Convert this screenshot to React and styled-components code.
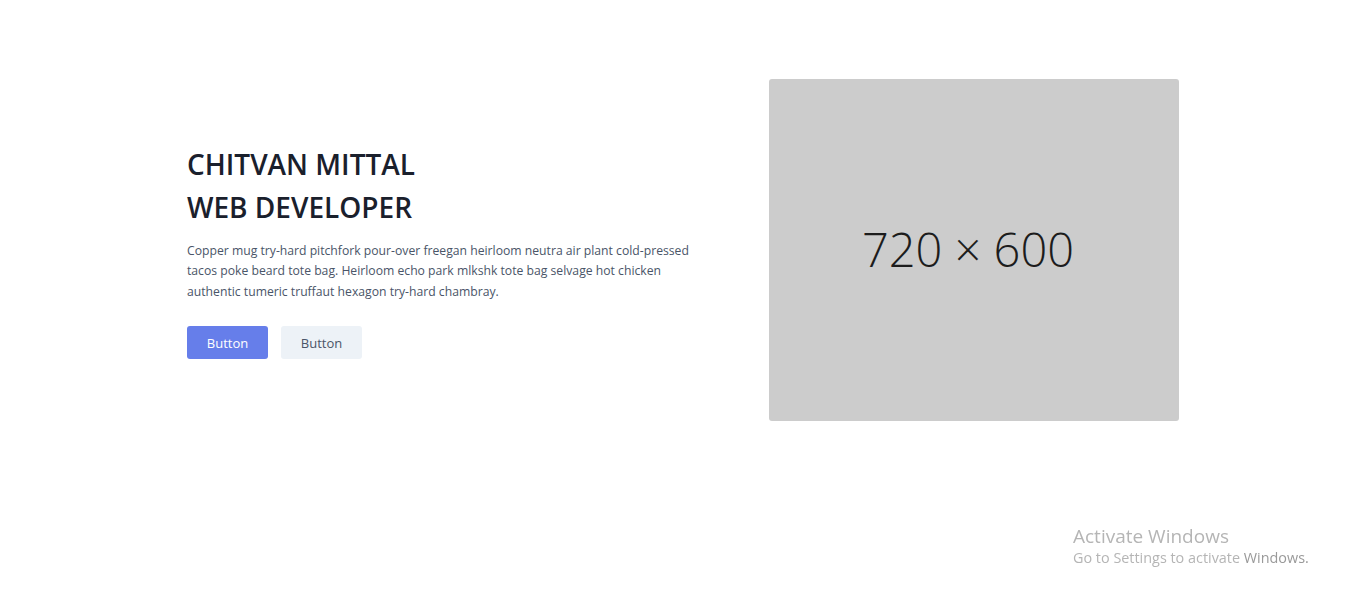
import React from 'react';
import styled, { createGlobalStyle } from 'styled-components';

const GlobalStyle = createGlobalStyle`
  html, body {
    margin: 0;
    padding: 0;
    background: #ffffff;
    font-family: "Open Sans", "Noto Sans", sans-serif;
  }
  * {
    box-sizing: border-box;
  }
`;

const Section = styled.section`
  color: #4a5568;
  padding: 79px 0 100px;
`;

const Container = styled.div`
  width: 992px;
  margin: 0 auto;
  display: flex;
  align-items: center;
  justify-content: space-between;
`;

const TextColumn = styled.div`
  flex: 1;
  padding-right: 64px;
  display: flex;
  flex-direction: column;
  align-items: flex-start;
`;

const Title = styled.h1`
  margin: 2px 0 12px;
  font-size: 28px;
  line-height: 43px;
  font-weight: 600;
  color: #1a202c;
`;

const Lead = styled.p`
  margin: 0 0 24px;
  font-size: 12.2px;
  line-height: 20.5px;
  color: #4a5568;
`;

const ButtonRow = styled.div`
  display: flex;
  gap: 13px;
`;

const Button = styled.button`
  width: 81px;
  height: 33px;
  border: none;
  border-radius: 3px;
  font-family: inherit;
  font-size: 13px;
  cursor: pointer;
  background: ${p => (p.$primary ? '#667eea' : '#edf2f7')};
  color: ${p => (p.$primary ? '#ffffff' : '#4a5568')};
`;

const ImageBox = styled.div`
  width: 410px;
  height: 342px;
  border-radius: 3px;
  background: #cccccc;
  display: flex;
  align-items: center;
  justify-content: center;
  color: #1c1c1c;
  font-size: 47px;
  font-weight: 300;
  padding: 0 12px 2px 0;
`;

const Watermark = styled.div`
  position: fixed;
  left: 1073px;
  top: 524px;
  color: #b5b5b5;
  font-family: "Open Sans", "Noto Sans", sans-serif;
  font-weight: 400;
`;

const WatermarkTitle = styled.div`
  font-size: 19px;
  line-height: 24px;
`;

const WatermarkText = styled.div`
  font-size: 14.4px;
  line-height: 20px;
  b {
    font-weight: 400;
    color: #9a9a9a;
  }
`;

export default function App() {
  return (
    <>
      <GlobalStyle />
      <Section>
        <Container>
          <TextColumn>
            <Title>
              CHITVAN MITTAL
              <br />
              WEB DEVELOPER
            </Title>
            <Lead>
              Copper mug try-hard pitchfork pour-over freegan heirloom neutra air plant cold-pressed
              tacos poke beard tote bag. Heirloom echo park mlkshk tote bag selvage hot chicken
              authentic tumeric truffaut hexagon try-hard chambray.
            </Lead>
            <ButtonRow>
              <Button $primary>Button</Button>
              <Button>Button</Button>
            </ButtonRow>
          </TextColumn>
          <ImageBox>720 × 600</ImageBox>
        </Container>
      </Section>
      <Watermark>
        <WatermarkTitle>Activate Windows</WatermarkTitle>
        <WatermarkText>
          Go to Settings to activate <b>Windows.</b>
        </WatermarkText>
      </Watermark>
    </>
  );
}
